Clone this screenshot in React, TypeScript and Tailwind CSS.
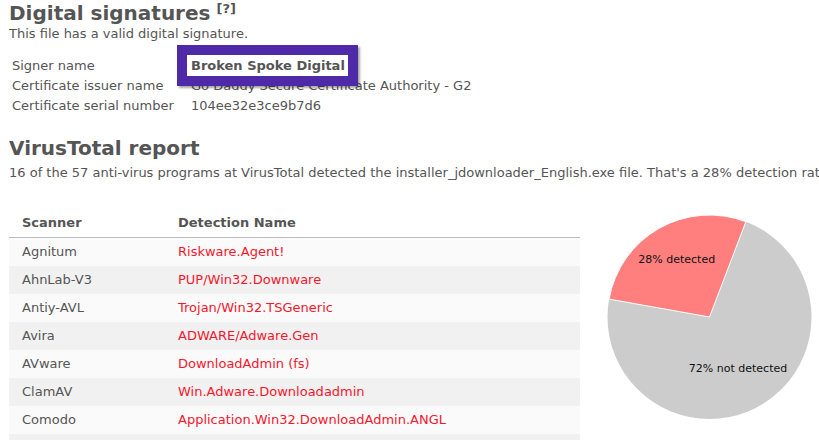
import React from 'react';

const signer = [
	{ label: 'Signer name', value: 'Broken Spoke Digital' },
	{ label: 'Certificate issuer name', value: 'Go Daddy Secure Certificate Authority - G2' },
	{ label: 'Certificate serial number', value: '104ee32e3ce9b7d6' },
];

const detections = [
	{ scanner: 'Agnitum', name: 'Riskware.Agent!' },
	{ scanner: 'AhnLab-V3', name: 'PUP/Win32.Downware' },
	{ scanner: 'Antiy-AVL', name: 'Trojan/Win32.TSGeneric' },
	{ scanner: 'Avira', name: 'ADWARE/Adware.Gen' },
	{ scanner: 'AVware', name: 'DownloadAdmin (fs)' },
	{ scanner: 'ClamAV', name: 'Win.Adware.Downloadadmin' },
	{ scanner: 'Comodo', name: 'Application.Win32.DownloadAdmin.ANGL' },
	{ scanner: 'DrWeb', name: 'Adware.Downware.10743' },
];

const DetectionPie: React.FC = () => {
	// 28% slice, drawn counterclockwise from the top-right edge
	const cx = 119.5;
	const cy = 116;
	const r = 102;
	const a0 = (-69.1 * Math.PI) / 180;
	const a1 = (-169.9 * Math.PI) / 180;
	const x0 = cx + r * Math.cos(a0);
	const y0 = cy + r * Math.sin(a0);
	const x1 = cx + r * Math.cos(a1);
	const y1 = cy + r * Math.sin(a1);

	return (
		<svg width="229" height="240" className="ml-[10px] shrink-0">
			<circle cx={cx} cy={cy} r={r} fill="#cccccc" />
			<path
				d={`M ${cx} ${cy} L ${x0} ${y0} A ${r} ${r} 0 0 0 ${x1} ${y1} Z`}
				fill="#ff7f7f"
				stroke="#ffffff"
				strokeWidth="1"
			/>
			<text x="86.7" y="62.3" textAnchor="middle" fontSize="11" fill="#111" fontFamily="'DejaVu Sans', sans-serif">
				28% detected
			</text>
			<text x="148" y="170.5" textAnchor="middle" fontSize="11" fill="#111" fontFamily="'DejaVu Sans', sans-serif">
				72% not detected
			</text>
		</svg>
	);
};

export default function App() {
	return (
		<div className="relative w-[819px] h-[440px] overflow-hidden bg-white pl-[9px] text-[#555] text-[13px] font-['DejaVu_Sans',sans-serif] whitespace-nowrap">
			<h2 className="text-[20px] leading-[26px] font-bold">
				Digital signatures
				<span className="relative top-[-7px] ml-[6px] text-[13px] leading-none font-bold">[?]</span>
			</h2>
			<p className="leading-[16px]">This file has a valid digital signature.</p>

			<table className="mt-[14px] border-collapse">
				<tbody>
					{signer.map((row) => (
						<tr key={row.label} className="h-[20px] leading-[20px]">
							<td className="w-[179px] pl-[3px] p-0">{row.label}</td>
							<td className="pl-[3px] p-0">{row.value}</td>
						</tr>
					))}
				</tbody>
			</table>

			<h2 className="mt-[19px] text-[20px] leading-[26px] font-bold">VirusTotal report</h2>
			<p className="leading-[16px] mt-[4px]">
				16 of the 57 anti-virus programs at VirusTotal detected the installer_jdownloader_English.exe file. That's a 28% detection rate.
			</p>

			<div className="mt-[20px] flex items-start">
				<table className="w-[571px] shrink-0 border-collapse">
					<thead>
						<tr className="border-b border-[#bbbbbb]">
							<th className="w-[156px] pl-[13px] pt-[14px] pb-[6px] text-left font-bold leading-[16px]">Scanner</th>
							<th className="pl-[13px] pt-[14px] pb-[6px] text-left font-bold leading-[16px]">Detection Name</th>
						</tr>
					</thead>
					<tbody>
						{detections.map((d, i) => (
							<tr key={d.scanner} className={i % 2 === 0 ? 'bg-[#fafafa]' : 'bg-[#f1f1f1]'}>
								<td className="pl-[13px] h-[28px] leading-[28px]">{d.scanner}</td>
								<td className="pl-[13px] h-[28px] leading-[28px] text-[#f5172d]">{d.name}</td>
							</tr>
						))}
					</tbody>
				</table>
				<DetectionPie />
			</div>

			{/* highlight annotation over the signer name */}
			<div className="absolute left-[177px] top-[45px] w-[181px] h-[41px] border-[10px] border-[#4f2aa8] bg-white shadow-[2px_2px_2px_rgba(0,0,0,0.35)] pl-[4px] font-bold leading-[21px]">
				Broken Spoke Digital
			</div>
		</div>
	);
}
